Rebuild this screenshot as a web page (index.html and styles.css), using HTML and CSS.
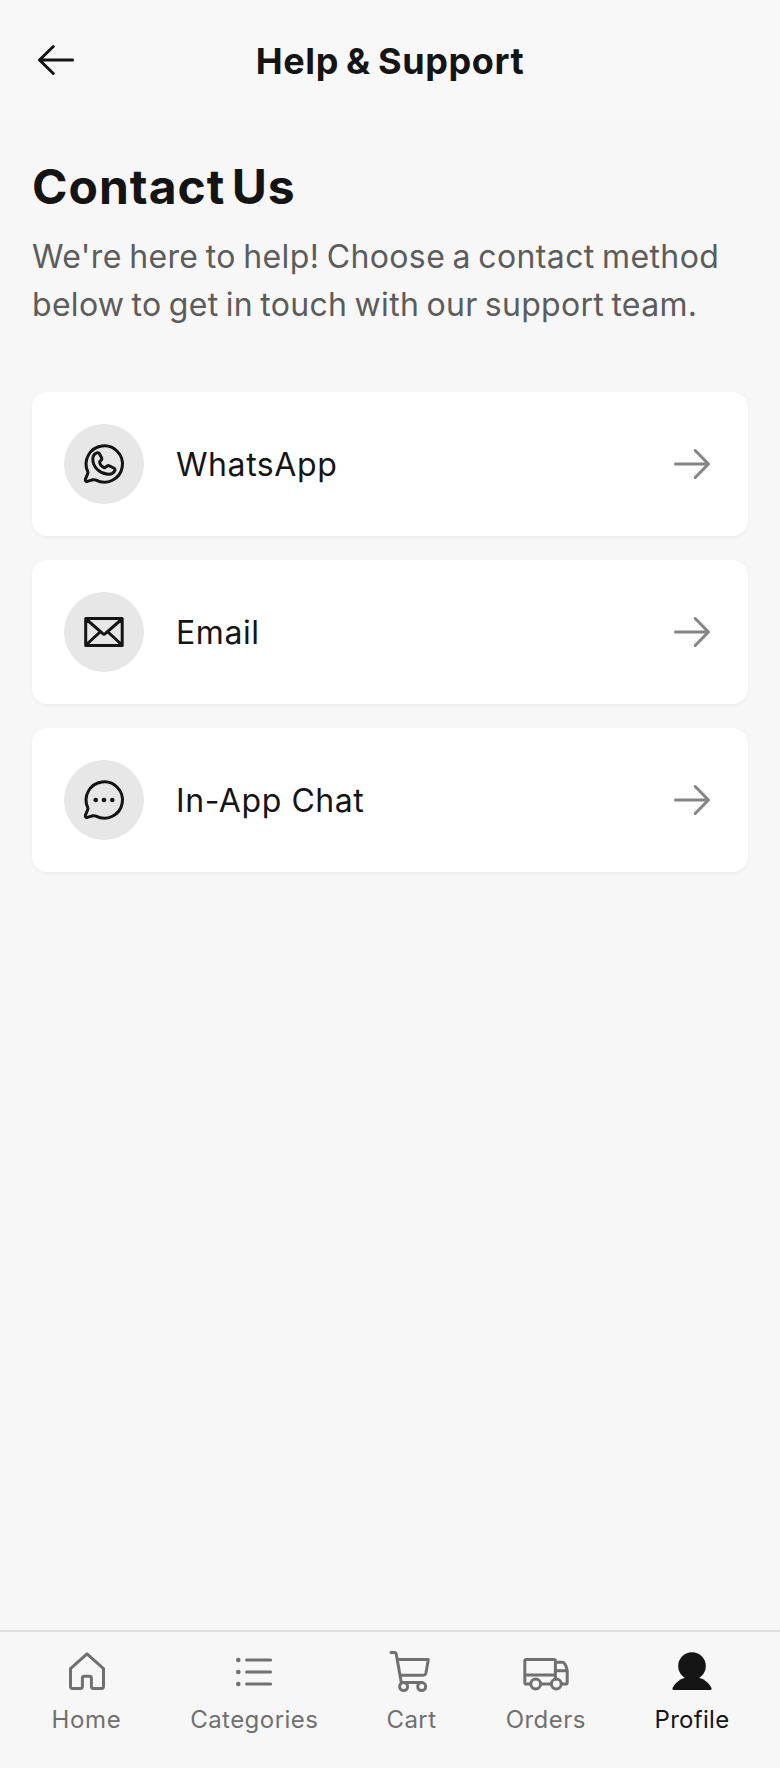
FILE: index.html
```html
<!DOCTYPE html>
<html lang="en">
<head>
<meta charset="utf-8">
<title>Help &amp; Support</title>
<link rel="stylesheet" href="styles.css">
</head>
<body>
<div class="screen">
  <header class="topbar">
    <svg class="icon back" viewBox="0 0 48 48"><path d="M40.5 24H7.5M21.3 10.5L7.5 24L21.3 37.5"/></svg>
    <h1 class="topbar-title">Help &amp; Support</h1>
  </header>
  <main class="content">
    <h2 class="heading">Contact Us</h2>
    <p class="intro"><span class="intro-a">We're here to help! Choose a contact method</span><br><span class="intro-b">below to get in touch with our support team.</span></p>
    <div class="cards">
      <a class="card">
        <span class="badge"><svg class="icon" viewBox="0 0 48 48"><path d="M7.7 31.5A18.2 18.2 0 1 1 16 40.2Q14.5 39.4 12.9 39.8L7.3 41.4Q4.9 41.8 5.4 39.2L7.6 34Q8.2 32.8 7.7 31.5Z"/><path d="M14.3 14.5Q17.6 11.6 19.4 13.6L21.8 18.2Q22.2 19.2 21.2 20.2L19.7 21.6Q19.4 25.5 24.6 27.8L27.3 25.9Q28.3 25.4 29.3 25.8L33.8 28Q35.8 29 34.5 31.2Q32.3 35 26.8 34.1C19.3 33 13 27 12.8 19.5Q12.6 16.3 14.3 14.5Z"/></svg></span>
        <span class="label">WhatsApp</span>
        <svg class="icon go" viewBox="0 0 48 48"><path d="M7.5 24H40.5M27.2 10.5L40.5 24L27.2 37.5"/></svg>
      </a>
      <a class="card">
        <span class="badge"><svg class="icon" viewBox="0 0 48 48"><path d="M5.7 10.5H42.2V37.5H5.7ZM6 11L22.8 25.7Q24 26.7 25.2 25.7L42 11M6 37L20 24M42 37L28 24"/></svg></span>
        <span class="label">Email</span>
        <svg class="icon go" viewBox="0 0 48 48"><path d="M7.5 24H40.5M27.2 10.5L40.5 24L27.2 37.5"/></svg>
      </a>
      <a class="card">
        <span class="badge"><svg class="icon" viewBox="0 0 48 48"><path d="M7.7 31.5A18.2 18.2 0 1 1 16 40.2Q14.5 39.4 12.9 39.8L7.3 41.4Q4.9 41.8 5.4 39.2L7.6 34Q8.2 32.8 7.7 31.5Z"/><g class="solid"><circle cx="15.7" cy="24" r="2.3"/><circle cx="24" cy="24" r="2.3"/><circle cx="32.3" cy="24" r="2.3"/></g></svg></span>
        <span class="label">In-App Chat</span>
        <svg class="icon go" viewBox="0 0 48 48"><path d="M7.5 24H40.5M27.2 10.5L40.5 24L27.2 37.5"/></svg>
      </a>
    </div>
  </main>
  <nav class="tabs">
    <a class="tab w-home"><svg class="icon" viewBox="0 0 48 48"><path d="M24 5.8L40.5 20.6V38.5Q40.5 40.4 38.6 40.4H30.3Q28.4 40.4 28.4 38.5V30.2Q28.4 28.3 26.5 28.3H21.3Q19.4 28.3 19.4 30.2V38.5Q19.4 40.4 17.5 40.4H9.4Q7.5 40.4 7.5 38.5V20.6Z"/></svg><span>Home</span></a>
    <a class="tab w-categories"><svg class="icon" viewBox="0 0 48 48"><path d="M16.6 12H40.6M16.6 24H40.6M16.6 36H40.6"/><g class="solid"><circle cx="8.3" cy="12" r="2.3"/><circle cx="8.3" cy="24" r="2.3"/><circle cx="8.3" cy="36" r="2.3"/></g></svg><span>Categories</span></a>
    <a class="tab w-cart"><svg class="icon" viewBox="0 0 48 48"><path d="M3 4.4H6.6Q7.9 4.4 8.2 6L13.3 34.4H34M9.4 11.6H40.3L38 24.8Q37.5 27.2 35.3 27.2H12"/><circle cx="15.6" cy="38.6" r="4"/><circle cx="33.7" cy="38.6" r="4"/></svg><span>Cart</span></a>
    <a class="tab w-orders"><svg class="icon" viewBox="0 0 48 48"><path d="M8.5 36H4.4Q2.8 36 2.8 34.4V13.1Q2.8 11.5 4.4 11.5H31.8Q33.4 11.5 33.4 13.1V31M19 36H29M39.5 36H43.6Q45.2 36 45.2 34.4V22.7Q44.6 18.3 42.8 15.8Q41.7 14.3 40 14.3H33.4M33.4 22.7H45M2.8 27H33.4"/><circle cx="13.7" cy="36" r="4.9"/><circle cx="34.3" cy="36" r="4.9"/></svg><span>Orders</span></a>
    <a class="tab w-profile active"><svg class="icon" viewBox="0 0 48 48"><g class="solid"><circle cx="24" cy="18" r="13.8"/><path d="M17 29.7H31Q39.5 32.3 43.5 40Q44 42 42.4 42H5.6Q4 42 4.5 40Q8.5 32.3 17 29.7Z"/></g></svg><span>Profile</span></a>
  </nav>
</div>
</body>
</html>
```
FILE: styles.css
```css
* { box-sizing: border-box; }
body {
  margin: 0;
  background: #f7f7f7;
  color: #141414;
  font-family: Inter, "Liberation Sans", sans-serif;
}
.screen {
  display: flex;
  flex-direction: column;
  width: 780px;
  height: 1768px;
}
.icon {
  display: block;
  width: 48px;
  height: 48px;
  flex: none;
  fill: none;
  stroke: currentColor;
  stroke-width: 3;
  stroke-linecap: round;
  stroke-linejoin: round;
}
.icon .solid { fill: currentColor; stroke: none; }
.topbar {
  display: grid;
  grid-template-columns: 48px 1fr 48px;
  align-items: center;
  height: 120px;
  padding: 0 32px;
  background: #f8f8f8;
}
.topbar-title {
  margin: 0;
  padding-top: 2px;
  text-align: center;
  white-space: nowrap;
  font-size: 36px;
  line-height: 44px;
  font-weight: 700;
  letter-spacing: 0.6px;
  word-spacing: -2px;
}
.content { flex: 1; padding: 37px 32px 0; }
.heading {
  margin: 0;
  font-size: 48px;
  line-height: 60px;
  font-weight: 700;
  letter-spacing: 1px;
  word-spacing: -6px;
}
.intro {
  margin: 16px 0 0;
  color: #5c5c5c;
  font-size: 32px;
  line-height: 48px;
  font-weight: 400;
  white-space: nowrap;
  word-spacing: -2px;
}
.intro-a { letter-spacing: 0.38px; }
.intro-b { letter-spacing: 0.3px; }
.cards { display: grid; gap: 24px; margin-top: 63px; }
.card {
  display: flex;
  align-items: center;
  height: 144px;
  padding: 0 32px;
  border-radius: 16px;
  background: #fff;
  box-shadow: 0 2px 4px rgba(0, 0, 0, 0.04);
}
.badge {
  display: grid;
  place-items: center;
  width: 80px;
  height: 80px;
  margin-right: 32px;
  border-radius: 50%;
  background: #e7e7e7;
}
.label {
  flex: 1;
  padding-top: 2px;
  font-size: 32px;
  line-height: 40px;
  font-weight: 400;
  letter-spacing: 0.57px;
  white-space: nowrap;
}
.go { color: #858585; }
.tabs {
  display: flex;
  justify-content: space-between;
  height: 138px;
  padding: 16px 50px 0;
  border-top: 2px solid #dedede;
}
.tab {
  display: flex;
  flex-direction: column;
  align-items: center;
  color: #707070;
  font-size: 24px;
  line-height: 32px;
  letter-spacing: 0.45px;
  white-space: nowrap;
}
.tab span { margin-top: 8px; }
.w-home { width: 73px; letter-spacing: 0.7px; }
.w-categories { width: 126px; }
.w-cart { width: 52px; }
.w-orders { width: 80px; }
.w-profile { width: 76px; letter-spacing: 0.3px; }
.active { color: #141414; }
```
